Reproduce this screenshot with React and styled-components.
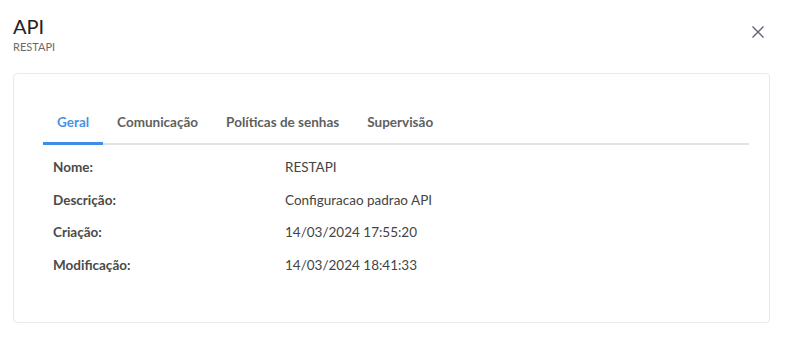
import React, { useState } from 'react';
import styled, { createGlobalStyle } from 'styled-components';

const GlobalStyle = createGlobalStyle`
  body {
    margin: 0;
    background: #fff;
    font-family: Lato, "Open Sans", sans-serif;
    color: #3f3f3f;
  }
`;

const Modal = styled.div`
  width: 787px;
  height: 358px;
  box-sizing: border-box;
  padding: 14px 17px 0 13px;
  display: flex;
  flex-direction: column;
`;

const Header = styled.div`
  display: flex;
  justify-content: space-between;
  align-items: flex-start;
  height: 59px;
`;

const TitleBlock = styled.div`
  display: flex;
  flex-direction: column;
`;

const Title = styled.h2`
  margin: 0;
  font-size: 20px;
  font-weight: 400;
  line-height: 24px;
  color: #222;
`;

const Subtitle = styled.span`
  font-size: 11px;
  line-height: 14px;
  margin-top: 2px;
  color: #6b6b6b;
`;

const CloseButton = styled.button`
  border: none;
  background: none;
  padding: 0;
  margin: 10px 4px 0 0;
  width: 16px;
  height: 16px;
  cursor: pointer;
  stroke: #5c6670;
  stroke-width: 1.4;
  fill: none;
`;

const Card = styled.div`
  border: 1px solid #e9e9e9;
  border-radius: 4px;
  height: 250px;
  box-sizing: border-box;
  padding: 29px 20px 0 29px;
`;

const TabBar = styled.div`
  display: flex;
  border-bottom: 2px solid #dfe2e6;
`;

const Tab = styled.button`
  border: none;
  background: none;
  font-family: inherit;
  font-size: 13.5px;
  font-weight: 700;
  line-height: 20px;
  padding: 9px 14px 10px;
  margin-bottom: -2px;
  cursor: pointer;
  color: ${p => (p.$active ? '#4a90e2' : '#5f5f5f')};
  border-bottom: 3px solid ${p => (p.$active ? '#3d8fe6' : 'transparent')};
`;

const Details = styled.dl`
  margin: 12px 0 0 10px;
  display: grid;
  grid-template-columns: 232px 1fr;
  row-gap: 12.5px;
`;

const Label = styled.dt`
  font-size: 13.5px;
  line-height: 20px;
  font-weight: 700;
  color: #4a4a4a;
`;

const Value = styled.dd`
  margin: 0;
  font-size: 13.5px;
  line-height: 20px;
  color: #444;
`;

const tabs = ['Geral', 'Comunicação', 'Políticas de senhas', 'Supervisão'];

const fields = [
  ['Nome:', 'RESTAPI'],
  ['Descrição:', 'Configuracao padrao API'],
  ['Criação:', '14/03/2024 17:55:20'],
  ['Modificação:', '14/03/2024 18:41:33'],
];

export default function App() {
  const [active, setActive] = useState(0);
  return (
    <>
      <GlobalStyle />
      <Modal>
        <Header>
          <TitleBlock>
            <Title>API</Title>
            <Subtitle>RESTAPI</Subtitle>
          </TitleBlock>
          <CloseButton aria-label="Fechar">
            <svg width="16" height="16" viewBox="0 0 16 16">
              <path d="M2.5 2.5 L13.5 13.5 M13.5 2.5 L2.5 13.5" />
            </svg>
          </CloseButton>
        </Header>
        <Card>
          <TabBar>
            {tabs.map((t, i) => (
              <Tab key={t} $active={i === active} onClick={() => setActive(i)}>
                {t}
              </Tab>
            ))}
          </TabBar>
          <Details>
            {fields.map(([k, v]) => (
              <React.Fragment key={k}>
                <Label>{k}</Label>
                <Value>{v}</Value>
              </React.Fragment>
            ))}
          </Details>
        </Card>
      </Modal>
    </>
  );
}
